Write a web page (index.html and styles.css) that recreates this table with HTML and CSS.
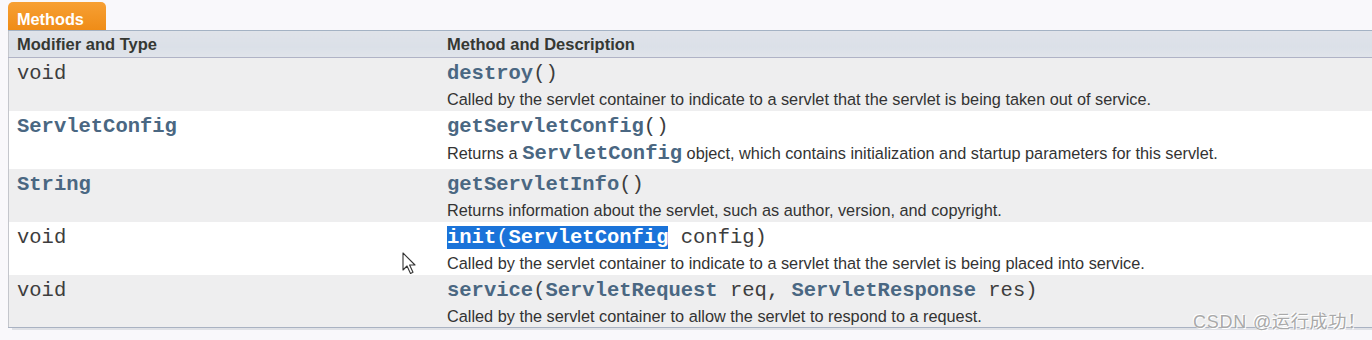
FILE: index.html
```html
<!DOCTYPE html>
<html>
<head>
<meta charset="utf-8">
<link rel="stylesheet" href="styles.css">
</head>
<body>
<div class="page">
  <div class="caption"><span class="tab">Methods</span></div>
  <table class="summary">
    <thead>
      <tr><th class="col-type">Modifier and Type</th><th class="col-method">Method and Description</th></tr>
    </thead>
    <tbody>
      <tr class="alt">
        <td class="type"><code>void</code></td>
        <td class="method"><div class="sig"><code><a>destroy</a>()</code></div><div class="desc">Called by the servlet container to indicate to a servlet that the servlet is being taken out of service.</div></td>
      </tr>
      <tr class="tall-row">
        <td class="type"><code><a>ServletConfig</a></code></td>
        <td class="method"><div class="sig"><code><a>getServletConfig</a>()</code></div><div class="desc tall">Returns a <code><a>ServletConfig</a></code> object, which contains initialization and startup parameters for this servlet.</div></td>
      </tr>
      <tr class="alt">
        <td class="type"><code><a>String</a></code></td>
        <td class="method"><div class="sig"><code><a>getServletInfo</a>()</code></div><div class="desc">Returns information about the servlet, such as author, version, and copyright.</div></td>
      </tr>
      <tr>
        <td class="type"><code>void</code></td>
        <td class="method cursor-cell"><div class="sig"><code><span class="sel"><a>init</a>(<a>ServletConfig</a></span>&nbsp;config)</code></div><div class="desc">Called by the servlet container to indicate to a servlet that the servlet is being placed into service.</div>
          <svg class="cursor" width="16" height="24" viewBox="0 0 16 24"><path d="M1 1 L1 18 L5 14 L8.5 21.5 L11 20.3 L7.6 13 L13 13 Z" fill="#fff" stroke="#333" stroke-width="1.1" stroke-linejoin="round"/></svg>
        </td>
      </tr>
      <tr class="alt">
        <td class="type"><code>void</code></td>
        <td class="method"><div class="sig"><code><a>service</a>(<a>ServletRequest</a>&nbsp;req, <a>ServletResponse</a>&nbsp;res)</code></div><div class="desc">Called by the servlet container to allow the servlet to respond to a request.</div></td>
      </tr>
    </tbody>
  </table>
  <div class="watermark">CSDN @运行成功！</div>
</div>
</body>
</html>
```

FILE: styles.css
```css
html, body {
  margin: 0;
  padding: 0;
  background: #f9f8fb;
}
.page {
  position: relative;
  width: 1372px;
  height: 340px;
  overflow: hidden;
  padding-left: 8px;
  padding-top: 2px;
  box-sizing: border-box;
  font-family: "Liberation Sans", Arial, sans-serif;
  color: #353833;
}
.caption {
  display: flex;
  height: 28px;
}
.tab {
  width: 98px;
  box-sizing: border-box;
  padding: 7px 0 0 9px;
  border-radius: 5px 5px 0 0;
  background: linear-gradient(#f7a034, #ef8c17);
  color: #fff;
  font-weight: bold;
  font-size: 16.3px;
  line-height: 20px;
}
.summary {
  border-collapse: collapse;
  width: 1380px;
  border-left: 1px solid #c4c6cc;
  border-bottom: 1px solid #a9b2c2;
  box-shadow: 0 6px 0 -4px #dfe1e6;
}
.summary th {
  background: linear-gradient(#dfe2e9, #dbe0e8 60%, #e0e4ea);
  border-top: 1px solid #a4b2c4;
  border-bottom: 1px solid #b0b3c6;
  height: 26px;
  padding: 0 8px;
  text-align: left;
  font-size: 16.5px;
  font-weight: bold;
  color: #353833;
}
.summary th.col-type {
  width: 414px;
}
.summary tbody tr {
  height: 53px;
  background: #ffffff;
}
.summary tbody tr.tall-row {
  height: 58px;
}
.summary tbody tr.alt {
  background: #eeeeef;
}
.summary td {
  vertical-align: top;
  padding: 2px 8px 0;
}
code {
  font-family: "Liberation Mono", "Courier New", monospace;
  font-size: 20.5px;
  color: #3d3d3d;
}
a {
  color: #4a6782;
  font-weight: bold;
}
.sig {
  line-height: 28px;
  white-space: nowrap;
}
.type {
  line-height: 28px;
}
.desc {
  font-size: 16.3px;
  line-height: 22px;
  color: #333;
}
.desc code {
  line-height: 22px;
}
.desc.tall {
  line-height: 25px;
}
.desc.tall code {
  line-height: 25px;
}
.sel {
  background: #1a73d9;
}
.sel a, .sel {
  color: #fff;
}
.cursor-cell {
  position: relative;
}
.cursor {
  position: absolute;
  left: -37px;
  top: 30px;
}
.watermark {
  position: absolute;
  right: 6px;
  bottom: 7px;
  font-family: "Liberation Sans", "Noto Sans CJK SC", sans-serif;
  font-size: 18px;
  color: #a9a9a9;
  text-shadow: 1px 1px 0 #fff, -1px -1px 0 #fff;
  letter-spacing: 0.8px;
}
```
